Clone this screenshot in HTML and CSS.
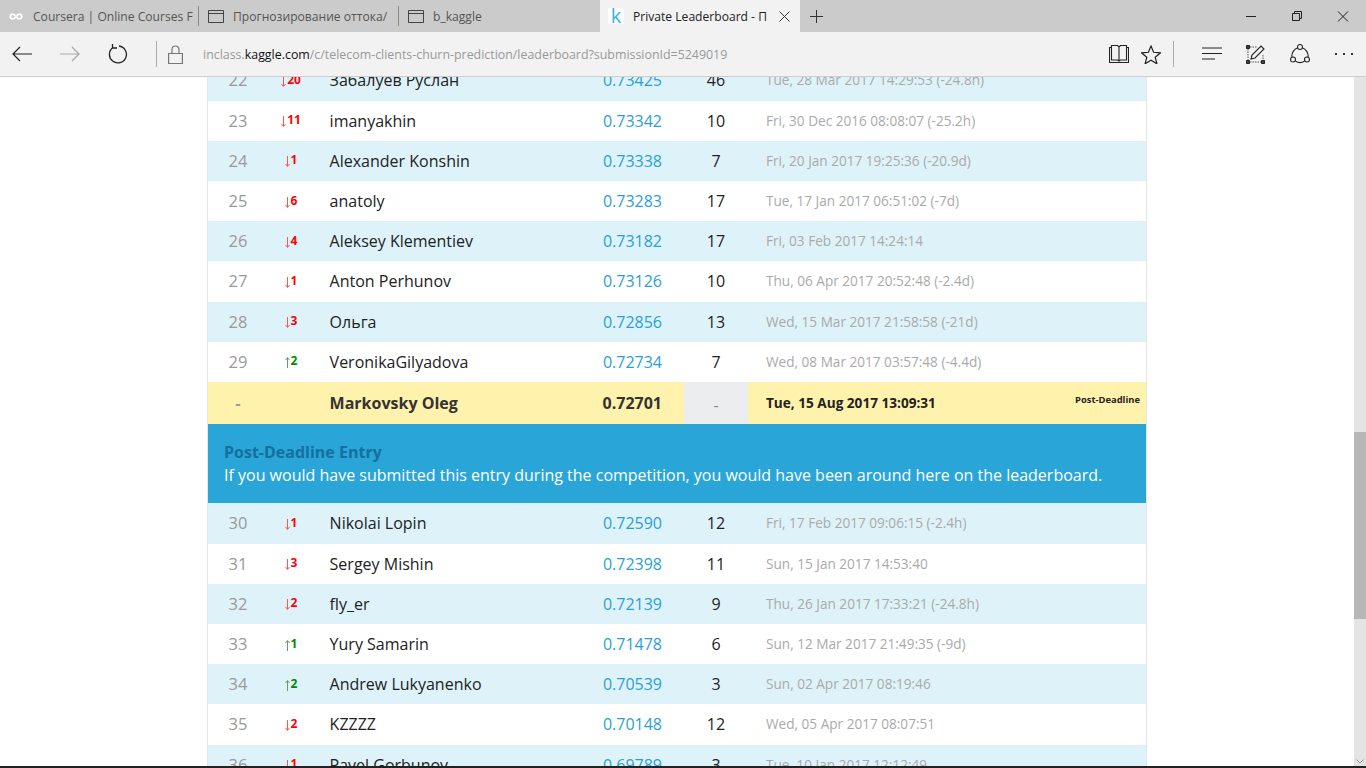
FILE: index.html
```html
<!DOCTYPE html>
<html>
<head>
    <title>Private Leaderboard</title>
    <link rel="stylesheet" href="styles.css">
</head>
<body>
    <svg class="defs" width="0" height="0">
        <symbol id="arrow-down" viewBox="0 0 5 11"><path d="M2.500 0v10M.5 8l2 2.500 2-2.500" fill="none" stroke="currentColor"/></symbol>
        <symbol id="arrow-up" viewBox="0 0 5 11"><path d="M2.500 11V1M.5 3l2-2.500 2 2.500" fill="none" stroke="currentColor"/></symbol>
        <symbol id="tab-page" viewBox="0 0 16 13"><path d="M.5.5h15v12H.5zM.5 3.500h15" fill="none" stroke="#444"/></symbol>
    </svg>

    <div class="tabbar">
        <div class="tab">
            <svg class="tab-icon" viewBox="0 0 16 16"><path d="M8 8C6.500 5.800 5.500 5 4 5a3 3 0 0 0 0 6c1.500 0 2.500-.8 4-3s2.500-3 4-3a3 3 0 0 1 0 6c-1.500 0-2.500-.8-4-3z" fill="none" stroke="#fff" stroke-width="2"/></svg>
            <span class="tab-title">Coursera | Online Courses F</span>
        </div>
        <div class="tab">
            <svg class="tab-icon"><use href="#tab-page"/></svg>
            <span class="tab-title">Прогнозирование оттока/</span>
        </div>
        <div class="tab">
            <svg class="tab-icon"><use href="#tab-page"/></svg>
            <span class="tab-title">b_kaggle</span>
        </div>
        <div class="tab tab-active">
            <span class="favicon">k</span>
            <span class="tab-title">Private Leaderboard - П</span>
            <svg class="tab-close" viewBox="0 0 11 11"><path d="M.5.5l10 10M10.500.5l-10 10" stroke="#333" fill="none"/></svg>
        </div>
        <svg class="new-tab" viewBox="0 0 13 13"><path d="M6.500 0v13M0 6.500h13" stroke="#333" fill="none"/></svg>
        <div class="window-buttons">
            <svg viewBox="0 0 46 32"><path d="M18 16.500h10" stroke="#222"/></svg>
            <svg viewBox="0 0 46 32"><path d="M18.500 13.500h7v7h-7zM20.500 13.500v-2h7v7h-2" fill="none" stroke="#222"/></svg>
            <svg viewBox="0 0 46 32"><path d="M18 11.500l10 10M28 11.500l-10 10" fill="none" stroke="#222"/></svg>
        </div>
    </div>

    <div class="toolbar">
        <svg class="tool tool-back" viewBox="0 0 20 16"><path d="M20 8H1M8 1L1 8l7 7" fill="none" stroke="#222" stroke-width="1.200"/></svg>
        <svg class="tool tool-forward" viewBox="0 0 20 16"><path d="M0 8h19M12 1l7 7-7 7" fill="none" stroke="#a8a8a8" stroke-width="1.200"/></svg>
        <svg class="tool tool-refresh" viewBox="0 0 20 20"><path d="M5 3.500A8.500 8.500 0 1 0 11 2M4.500 0v4H9" fill="none" stroke="#222" stroke-width="1.300"/></svg>
        <span class="tool-divider"></span>
        <svg class="tool-lock" viewBox="0 0 15 19"><path d="M.6 8.500h13.800v10H.6zM4 8.500V4.500a3.500 3.500 0 0 1 7 0v4" fill="none" stroke="#777" stroke-width="1.200"/></svg>
        <div class="address"><span>inclass.</span><b>kaggle.com</b><span>/c/telecom-clients-churn-prediction/leaderboard?submissionId=5249019</span></div>
        <svg class="tool tool-book" viewBox="0 0 20 18"><path d="M.5 2.500h2v-2h6l1.500 1.500L11.500.5h6v2h2v15H.5zM2.500 2.500v12.500h6l1.500 1 1.500-1h6V2.500M10 2v14" fill="none" stroke="#222" stroke-width="1.100"/></svg>
        <svg class="tool tool-star" viewBox="0 0 20 19"><path d="M10 1l2.600 6.300 6.900.5-5.300 4.400 1.700 6.600L10 15.200l-5.900 3.600 1.700-6.600L.5 7.800l6.900-.5z" fill="none" stroke="#222" stroke-width="1.200"/></svg>
        <span class="tool-divider tool-divider-right"></span>
        <svg class="tool tool-hub" viewBox="0 0 20 13"><path d="M0 1h20M0 6.500h20M0 12h13" fill="none" stroke="#222" stroke-width="1.200"/></svg>
        <svg class="tool tool-note" viewBox="0 0 19 19"><path d="M2 4v11M4 2h7M17 10v5M4 17h11" fill="none" stroke="#555" stroke-dasharray="1.500 1"/><path d="M.5.500h3v3h-3zM.5 15.500h3v3h-3zM15.500 15.500h3v3h-3z" fill="#444" stroke="#222"/><path d="M5 14l1-4L15 1l3 3-9 9z" fill="none" stroke="#222" stroke-width="1.100"/></svg>
        <svg class="tool tool-share" viewBox="0 0 20 20"><circle cx="10" cy="3" r="2.500" fill="none" stroke="#222" stroke-width="1.100"/><circle cx="3" cy="15.500" r="2.500" fill="none" stroke="#222" stroke-width="1.100"/><circle cx="17" cy="15.500" r="2.500" fill="none" stroke="#222" stroke-width="1.100"/><path d="M7.800 3.800A8.500 8.500 0 0 0 2 13M12.200 3.800A8.500 8.500 0 0 1 18 13M5.500 17.200A8.500 8.500 0 0 0 14.500 17.200" fill="none" stroke="#222" stroke-width="1.100"/></svg>
        <div class="tool-more"><i></i><i></i><i></i></div>
    </div>

    <div class="viewport">
        <div class="content">
            <div class="board">
                <div class="row row-odd"><span class="rank">22</span><span class="delta down"><svg><use href="#arrow-down"/></svg><b>20</b></span><span class="name">Забалуев Руслан</span><span class="score">0.73425</span><span class="entries">46</span><span class="last">Tue, 28 Mar 2017 14:29:53 (-24.8h)</span></div>
                <div class="row"><span class="rank">23</span><span class="delta down"><svg><use href="#arrow-down"/></svg><b>11</b></span><span class="name">imanyakhin</span><span class="score">0.73342</span><span class="entries">10</span><span class="last">Fri, 30 Dec 2016 08:08:07 (-25.2h)</span></div>
                <div class="row row-odd"><span class="rank">24</span><span class="delta down"><svg><use href="#arrow-down"/></svg><b>1</b></span><span class="name">Alexander Konshin</span><span class="score">0.73338</span><span class="entries">7</span><span class="last">Fri, 20 Jan 2017 19:25:36 (-20.9d)</span></div>
                <div class="row"><span class="rank">25</span><span class="delta down"><svg><use href="#arrow-down"/></svg><b>6</b></span><span class="name">anatoly</span><span class="score">0.73283</span><span class="entries">17</span><span class="last">Tue, 17 Jan 2017 06:51:02 (-7d)</span></div>
                <div class="row row-odd"><span class="rank">26</span><span class="delta down"><svg><use href="#arrow-down"/></svg><b>4</b></span><span class="name">Aleksey Klementiev</span><span class="score">0.73182</span><span class="entries">17</span><span class="last">Fri, 03 Feb 2017 14:24:14</span></div>
                <div class="row"><span class="rank">27</span><span class="delta down"><svg><use href="#arrow-down"/></svg><b>1</b></span><span class="name">Anton Perhunov</span><span class="score">0.73126</span><span class="entries">10</span><span class="last">Thu, 06 Apr 2017 20:52:48 (-2.4d)</span></div>
                <div class="row row-odd"><span class="rank">28</span><span class="delta down"><svg><use href="#arrow-down"/></svg><b>3</b></span><span class="name">Ольга</span><span class="score">0.72856</span><span class="entries">13</span><span class="last">Wed, 15 Mar 2017 21:58:58 (-21d)</span></div>
                <div class="row"><span class="rank">29</span><span class="delta up"><svg><use href="#arrow-up"/></svg><b>2</b></span><span class="name">VeronikaGilyadova</span><span class="score">0.72734</span><span class="entries">7</span><span class="last">Wed, 08 Mar 2017 03:57:48 (-4.4d)</span></div>
                <div class="row row-you"><span class="rank">-</span><span class="delta"></span><span class="name">Markovsky Oleg</span><span class="score">0.72701</span><span class="entries">-</span><span class="last">Tue, 15 Aug 2017 13:09:31<em class="late-tag">Post-Deadline</em></span></div>
                <div class="notice">
                    <strong>Post-Deadline Entry</strong>
                    <p>If you would have submitted this entry during the competition, you would have been around here on the leaderboard.</p>
                </div>
                <div class="row row-odd"><span class="rank">30</span><span class="delta down"><svg><use href="#arrow-down"/></svg><b>1</b></span><span class="name">Nikolai Lopin</span><span class="score">0.72590</span><span class="entries">12</span><span class="last">Fri, 17 Feb 2017 09:06:15 (-2.4h)</span></div>
                <div class="row"><span class="rank">31</span><span class="delta down"><svg><use href="#arrow-down"/></svg><b>3</b></span><span class="name">Sergey Mishin</span><span class="score">0.72398</span><span class="entries">11</span><span class="last">Sun, 15 Jan 2017 14:53:40</span></div>
                <div class="row row-odd"><span class="rank">32</span><span class="delta down"><svg><use href="#arrow-down"/></svg><b>2</b></span><span class="name">fly_er</span><span class="score">0.72139</span><span class="entries">9</span><span class="last">Thu, 26 Jan 2017 17:33:21 (-24.8h)</span></div>
                <div class="row"><span class="rank">33</span><span class="delta up"><svg><use href="#arrow-up"/></svg><b>1</b></span><span class="name">Yury Samarin</span><span class="score">0.71478</span><span class="entries">6</span><span class="last">Sun, 12 Mar 2017 21:49:35 (-9d)</span></div>
                <div class="row row-odd"><span class="rank">34</span><span class="delta up"><svg><use href="#arrow-up"/></svg><b>2</b></span><span class="name">Andrew Lukyanenko</span><span class="score">0.70539</span><span class="entries">3</span><span class="last">Sun, 02 Apr 2017 08:19:46</span></div>
                <div class="row"><span class="rank">35</span><span class="delta down"><svg><use href="#arrow-down"/></svg><b>2</b></span><span class="name">KZZZZ</span><span class="score">0.70148</span><span class="entries">12</span><span class="last">Wed, 05 Apr 2017 08:07:51</span></div>
                <div class="row row-odd"><span class="rank">36</span><span class="delta down"><svg><use href="#arrow-down"/></svg><b>1</b></span><span class="name">Pavel Gorbunov</span><span class="score">0.69789</span><span class="entries">3</span><span class="last">Tue, 10 Jan 2017 12:12:49</span></div>
            </div>
        </div>
        <div class="scrollbar">
            <div class="scroll-thumb"></div>
            <svg class="scroll-down" viewBox="0 0 8 5"><path d="M.5.500L4 4 7.500.500" fill="none" stroke="#999"/></svg>
        </div>
    </div>
    <div class="taskbar"></div>
</body>
</html>
```

FILE: styles.css
```css
html, body {
    margin: 0;
    height: 100%;
}

body {
    display: flex;
    flex-direction: column;
    height: 100vh;
    overflow: hidden;
    font-family: "Open Sans", sans-serif;
    background-color: #fff;
}

.defs {
    position: absolute;
}

/* browser chrome */
.tabbar {
    display: flex;
    align-items: center;
    flex: none;
    height: 32px;
    background-color: #cbcbcb;
}

.tab {
    display: flex;
    align-items: center;
    box-sizing: border-box;
    width: 200px;
    height: 32px;
    padding-left: 8px;
    position: relative;
    font-size: 12.100px;
    color: #555;
}

.tab + .tab::before {
    content: "";
    position: absolute;
    left: -2px;
    top: 6px;
    height: 20px;
    width: 1px;
    background-color: #888;
}

.tab-active::before {
    display: none;
}

.tab-icon {
    flex: none;
    width: 16px;
    height: 13px;
    margin-right: 9px;
}

.tab-title {
    white-space: nowrap;
    overflow: hidden;
    width: 160px;
}

.tab-active {
    background-color: #f2f2f2;
    color: #222;
}

.favicon {
    flex: none;
    width: 16px;
    height: 16px;
    margin-right: 9px;
    background-color: #fff;
    color: #2fb5e4;
    font-size: 20px;
    line-height: 15px;
    text-align: center;
}

.tab-active .tab-title {
    width: 136px;
}

.tab-close {
    width: 11px;
    height: 11px;
    margin-left: 10px;
}

.new-tab {
    width: 13px;
    height: 13px;
    margin-left: 10px;
}

.window-buttons {
    display: flex;
    margin-left: auto;
}

.window-buttons svg {
    width: 46px;
    height: 32px;
}

.toolbar {
    display: flex;
    align-items: center;
    flex: none;
    height: 44px;
    background-color: #f2f2f2;
    border-bottom: 1px solid #cdcdcd;
}

.tool {
    flex: none;
}

.tool-back {
    width: 20px;
    height: 16px;
    margin-left: 12px;
}

.tool-forward {
    width: 20px;
    height: 16px;
    margin-left: 28px;
}

.tool-refresh {
    width: 20px;
    height: 20px;
    margin-left: 28px;
}

.tool-divider {
    flex: none;
    width: 1px;
    height: 26px;
    margin-left: 28px;
    background-color: #aaa;
}

.tool-lock {
    flex: none;
    width: 15px;
    height: 19px;
    margin-left: 11px;
}

.address {
    flex: 1;
    margin-left: 20px;
    font-size: 12.400px;
    color: #999;
    white-space: nowrap;
}

.address b {
    font-weight: 400;
    color: #111;
}

.tool-book {
    width: 20px;
    height: 18px;
}

.tool-star {
    width: 20px;
    height: 19px;
    margin-left: 12px;
}

.tool-divider-right {
    margin-left: 12px;
}

.tool-hub {
    width: 20px;
    height: 13px;
    margin-left: 28px;
    margin-bottom: 2px;
}

.tool-note {
    width: 19px;
    height: 19px;
    margin-left: 24px;
}

.tool-share {
    width: 20px;
    height: 20px;
    margin-left: 25px;
}

.tool-more {
    display: flex;
    gap: 6px;
    margin-left: 25px;
    margin-right: 13px;
}

.tool-more i {
    width: 2px;
    height: 2px;
    background-color: #333;
}

/* page */
.viewport {
    display: flex;
    flex: 1;
    min-height: 0;
}

.content {
    flex: 1;
    overflow: hidden;
}

.board {
    box-sizing: border-box;
    width: 940px;
    margin: -16.600px auto 0;
    border-left: 1px solid #e4e4e4;
    border-right: 1px solid #e4e4e4;
}

.row {
    display: grid;
    grid-template-columns: 60px 46px 260px 110px 64px 1fr;
    align-items: stretch;
    height: 40.200px;
    line-height: 40px;
    font-size: 16px;
    color: #222;
    white-space: nowrap;
}

.row-odd {
    background-color: #def2fa;
}

.rank {
    text-align: center;
    font-size: 16.500px;
    color: #999;
}

.delta {
    display: flex;
    align-items: center;
    justify-content: center;
    gap: 1px;
    font-size: 12px;
    line-height: 16px;
}

.delta svg {
    width: 5px;
    height: 11px;
    margin-top: 2px;
}

.delta b {
    margin-bottom: 1px;
}

.down {
    color: #f00;
}

.down svg {
    color: #f55;
}

.up {
    color: #080;
}

.up svg {
    color: #6a9a6a;
}

.name {
    padding-left: 15.600px;
}

.score {
    padding-right: 22px;
    text-align: right;
    color: #2a9fd6;
}

.entries {
    text-align: center;
}

.last {
    padding-left: 18px;
    font-size: 13.600px;
    color: #aaa;
}

.row-you {
    height: 41.900px;
    line-height: 41.900px;
    background-color: #fff2ac;
    font-weight: 700;
    color: #333;
}

.row-you .name,
.row-you .score {
    padding-top: 1px;
    line-height: 40.900px;
}

.row-you .score {
    color: #333;
}

.row-you .entries {
    background-color: #ecedef;
    color: #888;
    font-weight: 400;
    padding-top: 6px;
    line-height: 35.900px;
}

.row-you .last {
    display: flex;
    justify-content: space-between;
    color: #222;
}

.late-tag {
    margin-right: 6px;
    font-size: 9.400px;
    font-style: normal;
    line-height: 36px;
}

.notice {
    box-sizing: border-box;
    height: 79.600px;
    padding: 17px 16px 0;
    background-color: #2aa5d8;
    font-size: 16px;
    line-height: 23px;
    color: #fff;
}

.notice strong {
    display: block;
    color: #14709f;
}

.notice p {
    margin: 0;
}

.scrollbar {
    flex: none;
    width: 12px;
    position: relative;
    background-color: #e4e4e4;
}

.scroll-thumb {
    position: absolute;
    top: 355px;
    left: 0;
    right: 0;
    height: 187px;
    background-color: #b7b7b7;
}

.scroll-down {
    position: absolute;
    left: 2px;
    bottom: 2px;
    width: 8px;
    height: 5px;
}

.taskbar {
    flex: none;
    height: 2px;
    background-color: #222;
}
```
